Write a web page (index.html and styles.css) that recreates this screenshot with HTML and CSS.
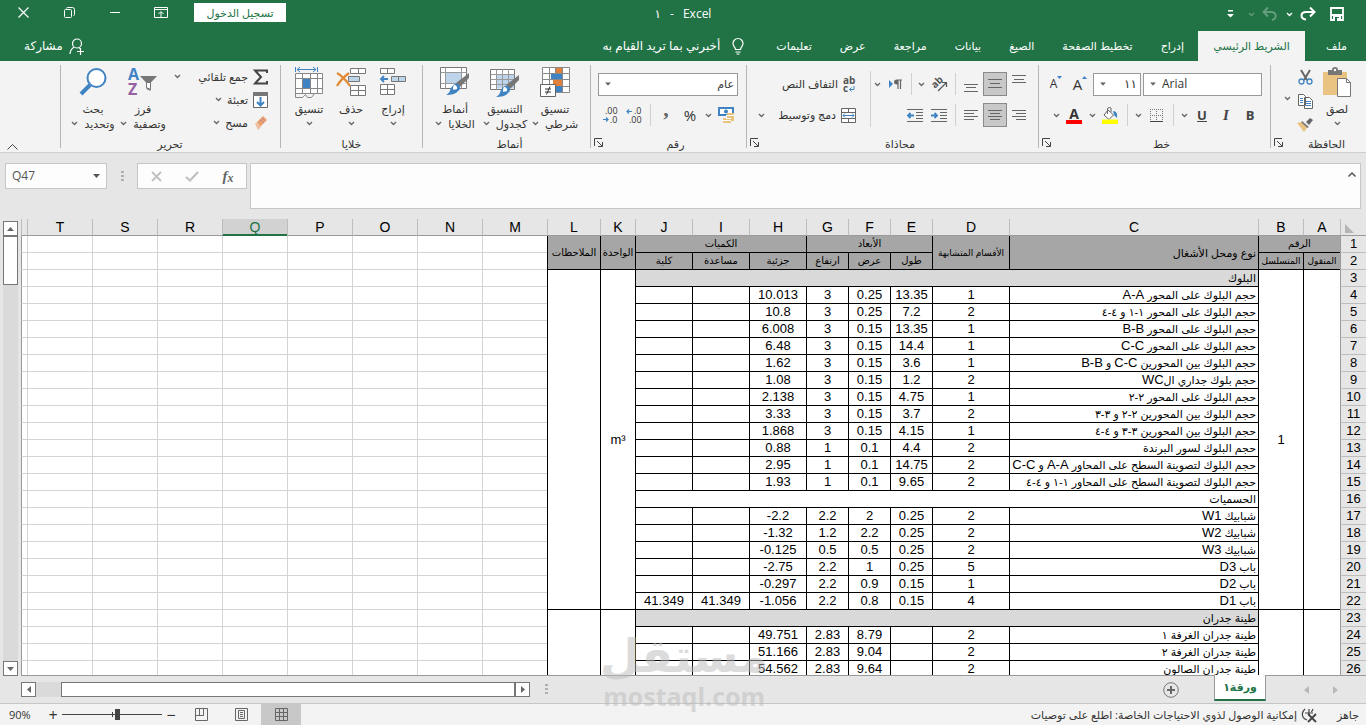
FILE: index.html
```html
<!DOCTYPE html>
<html lang="ar" dir="rtl">
<head>
<meta charset="utf-8">
<title>Excel - ١</title>
<link rel="stylesheet" href="styles.css">
</head>
<body>
<svg class="defs" aria-hidden="true">
  <symbol id="chev" viewBox="0 0 7 5"><path d="M1 1l2.500 2.500L6 1" fill="none" stroke="currentColor" stroke-width="1.300"/></symbol>
  <symbol id="tri" viewBox="0 0 7 4"><path d="M0 0h7L3.500 4z" fill="currentColor"/></symbol>
  <symbol id="launch" viewBox="0 0 9 9"><path d="M.5 8V.5H8M3 3l5 5M8.500 4v4.500H4" fill="none" stroke="#444" stroke-width="1"/></symbol>
  <symbol id="pen" viewBox="0 0 24 24"><path d="M23 1v5L14 15l-4-4z" fill="#777"/><path d="M12 12a4 4 0 0 1 0 7c-2 3-7 4-12 4 4-2 4-5 5-7 2-3 4-5 7-4z" fill="#3f83c3"/><path d="M8 13a3 3 0 0 1 3 4c-2 1-3 0-4 1 0-2 0-4 1-5z" fill="#fff"/></symbol>
</svg>

<header class="titlebar">
  <div class="quick">
    <button class="ic save" aria-label="حفظ"><svg width="14" height="14" viewBox="0 0 14 14"><path d="M1 1h12v12H1z" fill="none" stroke="#fff" stroke-width="1.800"/><path d="M1 7h12v2H1zM3 9h8v4H3z" fill="#fff"/><path d="M5 10h4v4H5z" fill="#217346"/><path d="M7 11h2v3H7z" fill="#fff"/></svg></button>
    <button class="ic" aria-label="إعادة"><svg width="16" height="14" viewBox="0 0 16 14"><path d="M14 5H6C0 5 0 12 6 12.500M10 .5L14.500 5 10 9.500" fill="none" stroke="#fff" stroke-width="2"/></svg></button>
    <button class="ch" aria-label="خيارات الإعادة"><svg width="7" height="5"><use href="#chev"/></svg></button>
    <button class="ic dim" aria-label="تراجع"><svg width="16" height="14" viewBox="0 0 16 14"><path d="M2 5h7c6 0 6 7 1 8M6 .5L1.500 5 6 9.500" fill="none" stroke="#fff" stroke-width="2"/></svg></button>
    <button class="ch dim" aria-label="خيارات التراجع"><svg width="7" height="5"><use href="#chev"/></svg></button>
    <button class="ic" aria-label="تخصيص"><svg width="7" height="8" viewBox="0 0 7 8"><path d="M1 0h5v1.500H1zM0 4h7L3.500 7.500z" fill="#fff"/></svg></button>
  </div>
  <h1 class="doc-title"><span>Excel</span><span>-</span><span>١</span></h1>
  <div class="window-tools">
    <button class="signin">تسجيل الدخول</button>
    <button class="win" aria-label="خيارات الشريط"><svg width="14" height="12" viewBox="0 0 14 12"><path d="M.5.5h13v10H.5zM.5 2.500h13M7 10V5M4.500 7L7 4.500 9.500 7" fill="none" stroke="#fff"/></svg></button>
    <button class="win" aria-label="تصغير"><svg width="10" height="12"><path d="M0 5.500h10" stroke="#fff"/></svg></button>
    <button class="win" aria-label="استعادة"><svg width="11" height="11" viewBox="0 0 11 11"><path d="M.5 3.500q0-1 1-1h5q1 0 1 1v6q0 1-1 1h-5q-1 0-1-1zM2.500 1.500q0-1 1-1h5q2 0 2 2v5q0 1-1 1" fill="none" stroke="#fff"/></svg></button>
    <button class="win" aria-label="إغلاق"><svg width="11" height="11"><path d="M.5.5l10 10M10.500.5l-10 10" stroke="#fff" stroke-width="1.200"/></svg></button>
  </div>
</header>

<nav class="tabs">
  <button class="tab file">ملف</button>
  <button class="tab active">الشريط الرئيسي</button>
  <button class="tab">إدراج</button>
  <button class="tab">تخطيط الصفحة</button>
  <button class="tab">الصيغ</button>
  <button class="tab">بيانات</button>
  <button class="tab">مراجعة</button>
  <button class="tab">عرض</button>
  <button class="tab">تعليمات</button>
  <button class="tell"><svg width="12" height="17" viewBox="0 0 12 17"><path d="M3.500 11.500C3.500 9 1 8.500 1 5.500a5 5 0 0 1 10 0c0 3-2.500 3.500-2.500 6zM3.500 14h5M4.500 16h3" fill="none" stroke="#fff" stroke-width="1.200"/></svg>أخبرني بما تريد القيام به</button>
  <button class="share"><svg width="16" height="17" viewBox="0 0 16 17"><circle cx="8" cy="5.500" r="4.500" fill="none" stroke="#fff" stroke-width="1.200"/><path d="M1 16q0-4 4-7M10 9.500l1 1M8 13.500h7M11.500 10v7" fill="none" stroke="#fff" stroke-width="1.200"/></svg>مشاركة</button>
</nav>

<section class="ribbon">
  <div class="group clipboard">
    <div class="body">
      <button class="big">
        <svg width="28" height="31" viewBox="0 0 28 31"><path d="M0 5h24v23H0z" fill="#eac282"/><path d="M5 3h4a3 3 0 0 1 6 0h4v5H5z" fill="#777"/><circle cx="12" cy="3" r="1.200" fill="#fff"/><path d="M14.500 11.500h9l4 4v14h-13z" fill="#fff" stroke="#777"/><path d="M23.500 11.500v4h4" fill="none" stroke="#777"/></svg>
        <span>لصق</span><svg width="7" height="5"><use href="#chev"/></svg>
      </button>
      <div class="stack">
        <button class="ic" aria-label="قص"><svg width="15" height="15" viewBox="0 0 15 15"><path d="M3 0l6 10M12 0L6 10" stroke="#666" stroke-width="2"/><circle cx="3.500" cy="11.500" r="2.500" fill="none" stroke="#3f83c3" stroke-width="1.300"/><circle cx="11.500" cy="11.500" r="2.500" fill="none" stroke="#3f83c3" stroke-width="1.300"/></svg></button>
        <button class="ic" aria-label="نسخ"><svg width="15" height="15" viewBox="0 0 15 15"><path d="M.5.5h5l2 2v9h-7zM6.500 3.500h5l3 3v8h-8z" fill="#fff" stroke="#666"/><path d="M2 4.500h3M2 6.500h3M2 8.500h3M8 7.500h5M8 9.500h5M8 11.500h5" stroke="#3f83c3"/></svg></button>
        <button class="ic" aria-label="نسخ التنسيق"><svg width="16" height="14" viewBox="0 0 16 14"><path d="M9 4l4-4 3 2-4 5z" fill="#666"/><path d="M5 3l7 6-2 1-6-5z" fill="#777"/><path d="M0 5l4-1 6 6-3 4z" fill="#eac282"/></svg></button>
      </div>
      <button class="ch" aria-label="خيارات النسخ"><svg width="7" height="5"><use href="#chev"/></svg></button>
    </div>
    <footer><h2>الحافظة</h2><button class="launch" aria-label="المزيد"><svg width="9" height="9"><use href="#launch"/></svg></button></footer>
  </div>

  <div class="group font">
    <div class="body rows">
      <div class="row">
        <div class="combo face"><input aria-label="الخط" value="Arial" dir="ltr"><svg width="6" height="4" viewBox="0 0 7 4"><use href="#tri"/></svg></div>
        <div class="combo size"><input aria-label="حجم الخط" value="١١"><svg width="6" height="4" viewBox="0 0 7 4"><use href="#tri"/></svg></div>
        <button class="ic grow" aria-label="تكبير الخط"><span>A</span><svg width="5" height="3" viewBox="0 0 5 3"><path d="M0 3h5L2.500 0z" fill="#3f83c3"/></svg></button>
        <button class="ic grow small" aria-label="تصغير الخط"><span>A</span><svg width="5" height="3" viewBox="0 0 5 3"><path d="M0 0h5L2.500 3z" fill="#3f83c3"/></svg></button>
      </div>
      <div class="row">
        <button class="ic letter">B</button>
        <button class="ic letter it">I</button>
        <button class="ic letter un">U</button>
        <button class="ch" aria-label="تسطير"><svg width="7" height="5"><use href="#chev"/></svg></button>
        <i class="sep"></i>
        <button class="ic" aria-label="حدود"><svg width="13" height="13" viewBox="0 0 13 13"><path d="M0 .5h13M0 6.500h13M.5 0v13M6.500 0v13M12.500 0v13" stroke="#777" stroke-dasharray="1 1"/><path d="M0 12.500h13" stroke="#444"/></svg></button>
        <button class="ch" aria-label="أنواع الحدود"><svg width="7" height="5"><use href="#chev"/></svg></button>
        <i class="sep"></i>
        <button class="ic" aria-label="لون التعبئة"><svg width="16" height="17" viewBox="0 0 16 17"><path d="M6 3l5.500 5L7 12.500 2 8z" fill="#fff" stroke="#666"/><path d="M5.500 7V2q0-1.500 2-1.500T9 2v3" fill="none" stroke="#666"/><path d="M11 4q5 0 4 7l-3-3z" fill="#3f83c3"/><path d="M0 12.500h16V17H0z" fill="#ff0"/></svg></button>
        <button class="ch" aria-label="ألوان التعبئة"><svg width="7" height="5"><use href="#chev"/></svg></button>
        <button class="ic color" aria-label="لون الخط"><span>A</span></button>
        <button class="ch" aria-label="ألوان الخط"><svg width="7" height="5"><use href="#chev"/></svg></button>
      </div>
    </div>
    <footer><h2>خط</h2><button class="launch" aria-label="المزيد"><svg width="9" height="9"><use href="#launch"/></svg></button></footer>
  </div>

  <div class="group align">
    <div class="body">
      <div class="rows">
        <div class="row">
          <button class="ic" aria-label="محاذاة لأعلى"><svg width="14" height="18"><path d="M0 .5h14M2 4.500h10M0 7.500h14" stroke="#666"/></svg></button>
          <button class="ic on" aria-label="محاذاة للوسط"><svg width="14" height="18"><path d="M0 4.500h14M2 8.500h10M0 12.500h14" stroke="#666"/></svg></button>
          <button class="ic" aria-label="محاذاة لأسفل"><svg width="14" height="18"><path d="M0 9.500h14M2 12.500h10M0 16.500h14" stroke="#666"/></svg></button>
          <i class="sep"></i>
          <button class="ic" aria-label="الاتجاه"><svg width="17" height="15" viewBox="0 0 17 15"><text x="0" y="0" class="ab" transform="translate(4 12) rotate(-45)">ab</text><path d="M7 14l8-8M11 5.500h4.500V10" fill="none" stroke="#555" stroke-width="1.200"/></svg></button>
          <button class="ch" aria-label="خيارات الاتجاه"><svg width="7" height="5"><use href="#chev"/></svg></button>
          <i class="sep"></i>
          <button class="ic" aria-label="اتجاه النص"><svg width="13" height="11" viewBox="0 0 13 11"><path d="M0 1l4 4-4 4z" fill="#3f83c3"/><path d="M9 1h4M9 1v9M11.500 1v9" stroke="#666" stroke-width="1.200"/><path d="M9 .5v5H8q-3 0-3-2.500T8 .5z" fill="#666"/></svg></button>
          <button class="ch" aria-label="خيارات اتجاه النص"><svg width="7" height="5"><use href="#chev"/></svg></button>
        </div>
        <div class="row">
          <button class="ic" aria-label="محاذاة لليمين"><svg width="14" height="12"><path d="M0 1.500h14M4 4.500h10M0 7.500h14M4 10.500h10" stroke="#666"/></svg></button>
          <button class="ic on" aria-label="توسيط"><svg width="14" height="12"><path d="M0 1.500h14M2 4.500h10M0 7.500h14M2 10.500h10" stroke="#666"/></svg></button>
          <button class="ic" aria-label="محاذاة لليسار"><svg width="14" height="12"><path d="M0 1.500h14M0 4.500h10M0 7.500h14M0 10.500h10" stroke="#666"/></svg></button>
          <i class="sep"></i>
          <button class="ic" aria-label="إنقاص المسافة البادئة"><svg width="16" height="13" viewBox="0 0 16 13"><path d="M0 .5h16M9 3.500h7M9 6.500h7M9 9.500h7M0 12.500h16" stroke="#666"/><path d="M0 6.500h6M3.500 4L6 6.500 3.500 9" fill="none" stroke="#3f83c3" stroke-width="1.800"/></svg></button>
          <button class="ic" aria-label="زيادة المسافة البادئة"><svg width="16" height="13" viewBox="0 0 16 13"><path d="M0 .5h16M9 3.500h7M9 6.500h7M9 9.500h7M0 12.500h16" stroke="#666"/><path d="M1 6.500h6M3.500 4L1 6.500 3.500 9" fill="none" stroke="#3f83c3" stroke-width="1.800"/></svg></button>
        </div>
      </div>
      <i class="rule"></i>
      <div class="rows wide">
        <button class="row item"><svg width="13" height="17" viewBox="0 0 13 17"><text x="0" y="8" class="ab">ab</text><text x="0" y="16" class="ab">c</text><path d="M11 10v3.500H6.500M8.500 11.500l-2 2 2 2" fill="none" stroke="#3f83c3"/></svg>التفاف النص</button>
        <button class="row item"><svg width="15" height="15" viewBox="0 0 15 15"><path d="M.5.5h14v14H.5zM.5 4.500h14M.5 10.500h14M7.500.5v4M7.500 10.500v4" fill="#fff" stroke="#666"/><path d="M2 7.500h11M4 5.500l-2 2 2 2M11 5.500l2 2-2 2" fill="none" stroke="#3f83c3"/></svg>دمج وتوسيط<svg class="far" width="7" height="5"><use href="#chev"/></svg></button>
      </div>
    </div>
    <footer><h2>محاذاة</h2><button class="launch" aria-label="المزيد"><svg width="9" height="9"><use href="#launch"/></svg></button></footer>
  </div>

  <div class="group number">
    <div class="body rows">
      <div class="row"><div class="combo fmt"><input aria-label="تنسيق الأرقام" value="عام"><svg width="6" height="4" viewBox="0 0 7 4"><use href="#tri"/></svg></div></div>
      <div class="row">
        <button class="ic" aria-label="تنسيق محاسبي"><svg width="16" height="16" viewBox="0 0 16 16"><path d="M0 0h16v9H0z" fill="#3f83c3"/><path d="M2 2h12v5H2z" fill="#fff"/><circle cx="8" cy="4.500" r="2" fill="#3f83c3"/><path d="M9 6h7v8h-3v2H5v-5h4z" fill="#eac282"/><path d="M8 8.500h8M8 11.500h5M5 13.500h8" stroke="#fff"/></svg></button>
        <button class="ch" aria-label="خيارات العملة"><svg width="7" height="5"><use href="#chev"/></svg></button>
        <button class="ic percent">%</button>
        <button class="ic comma">,</button>
        <i class="sep"></i>
        <button class="ic" aria-label="إنقاص المنازل"><svg width="16" height="14" viewBox="0 0 16 14"><text x="8" y="6" class="dec">.0</text><text x="3" y="15" class="dec">.00</text><path d="M1 3.500h5M3 1.500l-2 2 2 2" fill="none" stroke="#3f83c3" stroke-width="1.200"/></svg></button>
        <button class="ic" aria-label="زيادة المنازل"><svg width="16" height="14" viewBox="0 0 16 14"><text x="3" y="6" class="dec">.00</text><text x="8" y="15" class="dec">.0</text><path d="M1 11.500h5M4 9.500l2 2-2 2" fill="none" stroke="#3f83c3" stroke-width="1.200"/></svg></button>
      </div>
    </div>
    <footer><h2>رقم</h2><button class="launch" aria-label="المزيد"><svg width="9" height="9"><use href="#launch"/></svg></button></footer>
  </div>

  <div class="group styles">
    <div class="body">
      <button class="big"><svg width="30" height="31" viewBox="0 0 30 31"><path d="M2.500.5h27v25h-27zM2.500 6.500h27M2.500 12.500h27M2.500 19.500h27M9.500.5v25M15.500.5v25M22.500.5v25" fill="#fff" stroke="#888"/><path d="M16 1h6v5h-6zM13 13h9v6h-9z" fill="#e0803a"/><path d="M11 7h11v5H11zM16 19h6v6h-6z" fill="#3f83c3"/><path d="M.5 17.500h15v12H.5z" fill="#fff" stroke="#666"/><path d="M5 22h6M5 25h6M10 19.500L6.500 27.500" stroke="#333"/></svg><span>تنسيق</span><span class="l2">شرطي<svg width="7" height="5"><use href="#chev"/></svg></span></button>
      <button class="big"><svg width="30" height="31" viewBox="0 0 30 31"><path d="M.5 2.500h24v20H.5z" fill="#fff" stroke="#777"/><path d="M7 7.500h17v14H7z" fill="#bdd4ea"/><path d="M.5 7.500h24M.5 12.500h24M.5 17.500h24M6.500 2.500v20M12.500 2.500v20M18.500 2.500v20" stroke="#999"/><use href="#pen" x="6" y="7" width="24" height="24"/></svg><span>التنسيق</span><span class="l2">كجدول<svg width="7" height="5"><use href="#chev"/></svg></span></button>
      <button class="big"><svg width="30" height="31" viewBox="0 0 30 31"><path d="M.5.5h26v21H.5z" fill="#fff" stroke="#777"/><path d="M5 6h16v10H5z" fill="#bdd4ea"/><path d="M.5 5.500h26M.5 16.500h26M5.500.5v21M21.500.5v21" fill="none" stroke="#999"/><use href="#pen" x="6" y="5" width="24" height="24"/></svg><span>أنماط</span><span class="l2">الخلايا<svg width="7" height="5"><use href="#chev"/></svg></span></button>
    </div>
    <footer><h2>أنماط</h2></footer>
  </div>

  <div class="group cells">
    <div class="body">
      <button class="big"><svg width="26" height="31" viewBox="0 0 26 31"><path d="M.5 1.500h14v5H.5zM7.500 1.500v5M.5 17.500h14v10H.5zM.5 22.500h14M7.500 17.500v10" fill="#fff" stroke="#777"/><path d="M11.500 9.500h14v5h-14zM18.500 9.500v5" fill="#bdd4ea" stroke="#777"/><path d="M1 12h7M4 9l-3 3 3 3" fill="none" stroke="#3f83c3" stroke-width="1.800"/></svg><span>إدراج</span><svg width="7" height="5"><use href="#chev"/></svg></button>
      <button class="big"><svg width="30" height="31" viewBox="0 0 30 31"><path d="M14.500 1.500h15v5h-15zM22.500 1.500v5M14.500 18.500h15v10h-15zM14.500 23.500h15M22.500 18.500v10" fill="#fff" stroke="#777"/><path d="M12.500 9.500h11v5h-11z" fill="#bdd4ea" stroke="#777"/><path d="M1 6q7 4 13 13M13 6Q5 12 1 19" fill="none" stroke="#e08a35" stroke-width="2.200"/></svg><span>حذف</span><svg width="7" height="5"><use href="#chev"/></svg></button>
      <button class="big"><svg width="28" height="31" viewBox="0 0 28 31"><path d="M.5 0v5M22.500 0v5M2 2.500h19M5 0L2 2.500 5 5M18 0l3 2.500L18 5" fill="none" stroke="#3f83c3"/><path d="M.5 6.500h27v20H.5zM.5 11.500h27M.5 21.500h27M7.500 6.500v20M15.500 6.500v20M22.500 6.500v20" fill="#fff" stroke="#888"/><path d="M8 12h7v9H8z" fill="#3f83c3"/><path d="M.5 26v4.500h7l3-3 2 3h4l3-4" fill="none" stroke="#888"/></svg><span>تنسيق</span><svg width="7" height="5"><use href="#chev"/></svg></button>
    </div>
    <footer><h2>خلايا</h2></footer>
  </div>

  <div class="group editing">
    <div class="body">
      <div class="list">
        <button class="item"><svg width="15" height="16" viewBox="0 0 15 16"><path d="M14 4V1.500H2L8 8l-6 6.500h12V12" fill="none" stroke="#444" stroke-width="2"/></svg>جمع تلقائي<svg class="far" width="7" height="5"><use href="#chev"/></svg></button>
        <button class="item"><svg width="15" height="16" viewBox="0 0 15 16"><path d="M.5.5h14v15H.5z" fill="#fff" stroke="#666"/><path d="M0 0h15v4H0z" fill="#777"/><path d="M7.500 5v8M4 10l3.500 3.500L11 10" fill="none" stroke="#3f83c3" stroke-width="2"/></svg>تعبئة<svg width="7" height="5"><use href="#chev"/></svg></button>
        <button class="item"><svg width="15" height="14" viewBox="0 0 15 14"><path d="M4 6l6-6 4 4-7 7z" fill="#eba06b"/><path d="M2 8l2-2 4 5-3 3z" fill="#ecc0a0"/><path d="M7 4l4 3M9 2l3 3" stroke="#a078c8" stroke-dasharray="1 1"/></svg>مسح<svg width="7" height="5"><use href="#chev"/></svg></button>
      </div>
      <button class="big"><svg width="30" height="31" viewBox="0 0 30 31"><text x="0" y="13" class="az a">A</text><text x="0" y="28" class="az z">Z</text><path d="M12 9h17l-6.500 7v8l-4-2v-6z" fill="#777"/><path d="M18.500 15.500h4v7l-4-2z" fill="#fff" stroke="#777"/></svg><span>فرز</span><span class="l2">وتصفية<svg width="7" height="5"><use href="#chev"/></svg></span></button>
      <button class="big"><svg width="28" height="31" viewBox="0 0 28 31"><circle cx="17.500" cy="11" r="9" fill="#fff" stroke="#3f83c3" stroke-width="2"/><path d="M11 18l-9 9" stroke="#3f83c3" stroke-width="4"/></svg><span>بحث</span><span class="l2">وتحديد<svg width="7" height="5"><use href="#chev"/></svg></span></button>
    </div>
    <footer><h2>تحرير</h2></footer>
  </div>
  <button class="collapse" aria-label="طي الشريط"><svg width="11" height="6"><path d="M.5 5.500l5-5 5 5" fill="none" stroke="#444"/></svg></button>
</section>

<section class="formula">
  <div class="fx-field"><textarea aria-label="شريط الصيغة"></textarea><button aria-label="توسيع"><svg width="8" height="5"><path d="M.5 4.500L4 1l3.500 3.500" fill="none" stroke="#555" stroke-width="1.500"/></svg></button></div>
  <div class="fx-tools">
    <button aria-label="إدراج دالة"><em>f</em><em class="sub">x</em></button>
    <button aria-label="إدخال"><svg width="14" height="11"><path d="M1 6l4 3.500L13 1" fill="none" stroke="#c0c0c0" stroke-width="2.200"/></svg></button>
    <button aria-label="إلغاء"><svg width="11" height="11"><path d="M1 1l9 9M10 1l-9 9" stroke="#c0c0c0" stroke-width="1.800"/></svg></button>
  </div>
  <i class="grip"></i>
  <div class="namebox"><input aria-label="مربع الاسم" value="Q47" dir="ltr"><svg width="7" height="4"><use href="#tri"/></svg></div>
</section>

<main class="sheet">
  <div class="grid">
  <table>
    <colgroup><col class="c-row"><col class="c-a"><col class="c-b"><col class="c-c"><col class="c-d"><col class="c-n" span="3"><col class="c-t" span="3"><col class="c-k"><col class="c-l"><col class="c-x" span="8"><col></colgroup>
    <thead><tr><th class="corner"><svg width="9" height="9"><path d="M0 0v9h9z" fill="#b5b5b5"/></svg></th><th>A</th><th>B</th><th>C</th><th>D</th><th>E</th><th>F</th><th>G</th><th>H</th><th>I</th><th>J</th><th>K</th><th>L</th><th>M</th><th>N</th><th>O</th><th>P</th><th class="sel">Q</th><th>R</th><th>S</th><th>T</th><th></th></tr></thead>
    <tbody>
    <tr><th>1</th><td class="h" colspan="2">الرقم</td><td class="h t" rowspan="2">نوع ومحل الأشغال</td><td class="h tight" rowspan="2">الأقسام المتشابهة</td><td class="h" colspan="3">الأبعاد</td><td class="h" colspan="3">الكميات</td><td class="h" rowspan="2">الواحدة</td><td class="h" rowspan="2">الملاحظات</td><td class="e" colspan="9"></td></tr>
    <tr><th>2</th><td class="h tight">المنقول</td><td class="h tight">المتسلسل</td><td class="h">طول</td><td class="h">عرض</td><td class="h">ارتفاع</td><td class="h">جزئية</td><td class="h">مساعدة</td><td class="h">كلية</td><td class="e" colspan="9"></td></tr>
    <tr><th>3</th><td rowspan="20"></td><td rowspan="20">1</td><td class="t g" colspan="8">البلوك</td><td rowspan="20">m³</td><td rowspan="20"></td><td class="e" colspan="9"></td></tr>
    <tr><th>4</th><td class="t">حجم البلوك على المحور <span>A-A</span></td><td>1</td><td>13.35</td><td>0.25</td><td>3</td><td>10.013</td><td></td><td></td><td class="e" colspan="9"></td></tr>
    <tr><th>5</th><td class="t">حجم البلوك على المحور ١-١ و ٤-٤</td><td>2</td><td>7.2</td><td>0.25</td><td>3</td><td>10.8</td><td></td><td></td><td class="e" colspan="9"></td></tr>
    <tr><th>6</th><td class="t">حجم البلوك على المحور <span>B-B</span></td><td>1</td><td>13.35</td><td>0.15</td><td>3</td><td>6.008</td><td></td><td></td><td class="e" colspan="9"></td></tr>
    <tr><th>7</th><td class="t">حجم البلوك على المحور <span>C-C</span></td><td>1</td><td>14.4</td><td>0.15</td><td>3</td><td>6.48</td><td></td><td></td><td class="e" colspan="9"></td></tr>
    <tr><th>8</th><td class="t">حجم البلوك بين المحورين <span>C-C</span> و <span>B-B</span></td><td>1</td><td>3.6</td><td>0.15</td><td>3</td><td>1.62</td><td></td><td></td><td class="e" colspan="9"></td></tr>
    <tr><th>9</th><td class="t">حجم بلوك جداري ال<span>WC</span></td><td>2</td><td>1.2</td><td>0.15</td><td>3</td><td>1.08</td><td></td><td></td><td class="e" colspan="9"></td></tr>
    <tr><th>10</th><td class="t">حجم البلوك على المحور ٢-٢</td><td>1</td><td>4.75</td><td>0.15</td><td>3</td><td>2.138</td><td></td><td></td><td class="e" colspan="9"></td></tr>
    <tr><th>11</th><td class="t">حجم البلوك بين المحورين ٢-٢ و ٣-٣</td><td>2</td><td>3.7</td><td>0.15</td><td>3</td><td>3.33</td><td></td><td></td><td class="e" colspan="9"></td></tr>
    <tr><th>12</th><td class="t">حجم البلوك بين المحورين ٣-٣ و ٤-٤</td><td>1</td><td>4.15</td><td>0.15</td><td>3</td><td>1.868</td><td></td><td></td><td class="e" colspan="9"></td></tr>
    <tr><th>13</th><td class="t">حجم البلوك لسور البرندة</td><td>2</td><td>4.4</td><td>0.1</td><td>1</td><td>0.88</td><td></td><td></td><td class="e" colspan="9"></td></tr>
    <tr><th>14</th><td class="t">حجم البلوك لتصوينة السطح على المحاور <span>A-A</span> و <span>C-C</span></td><td>2</td><td>14.75</td><td>0.1</td><td>1</td><td>2.95</td><td></td><td></td><td class="e" colspan="9"></td></tr>
    <tr><th>15</th><td class="t">حجم البلوك لتصوينة السطح على المحاور ١-١ و ٤-٤</td><td>2</td><td>9.65</td><td>0.1</td><td>1</td><td>1.93</td><td></td><td></td><td class="e" colspan="9"></td></tr>
    <tr><th>16</th><td class="t" colspan="8">الحسميات</td><td class="e" colspan="9"></td></tr>
    <tr><th>17</th><td class="t">شبابيك <span>W1</span></td><td>2</td><td>0.25</td><td>2</td><td>2.2</td><td>-2.2</td><td></td><td></td><td class="e" colspan="9"></td></tr>
    <tr><th>18</th><td class="t">شبابيك <span>W2</span></td><td>2</td><td>0.25</td><td>2.2</td><td>1.2</td><td>-1.32</td><td></td><td></td><td class="e" colspan="9"></td></tr>
    <tr><th>19</th><td class="t">شبابيك <span>W3</span></td><td>2</td><td>0.25</td><td>0.5</td><td>0.5</td><td>-0.125</td><td></td><td></td><td class="e" colspan="9"></td></tr>
    <tr><th>20</th><td class="t">باب <span>D3</span></td><td>5</td><td>0.25</td><td>1</td><td>2.2</td><td>-2.75</td><td></td><td></td><td class="e" colspan="9"></td></tr>
    <tr><th>21</th><td class="t">باب <span>D2</span></td><td>1</td><td>0.15</td><td>0.9</td><td>2.2</td><td>-0.297</td><td></td><td></td><td class="e" colspan="9"></td></tr>
    <tr><th>22</th><td class="t">باب <span>D1</span></td><td>4</td><td>0.15</td><td>0.8</td><td>2.2</td><td>-1.056</td><td>41.349</td><td>41.349</td><td class="e" colspan="9"></td></tr>
    <tr><th>23</th><td rowspan="4"></td><td rowspan="4"></td><td class="t g" colspan="8">طينة جدران</td><td rowspan="4"></td><td rowspan="4"></td><td class="e" colspan="9"></td></tr>
    <tr><th>24</th><td class="t">طينة جدران الغرفة ١</td><td>2</td><td></td><td>8.79</td><td>2.83</td><td>49.751</td><td></td><td></td><td class="e" colspan="9"></td></tr>
    <tr><th>25</th><td class="t">طينة جدران الغرفة ٢</td><td>2</td><td></td><td>9.04</td><td>2.83</td><td>51.166</td><td></td><td></td><td class="e" colspan="9"></td></tr>
    <tr><th>26</th><td class="t">طينة جدران الصالون</td><td>2</td><td></td><td>9.64</td><td>2.83</td><td>54.562</td><td></td><td></td><td class="e" colspan="9"></td></tr>
    </tbody>
  </table>
  </div>
  <div class="vscroll">
    <button aria-label="لأعلى"><svg width="7" height="4" viewBox="0 0 7 4"><path d="M0 4h7L3.500 0z" fill="#666"/></svg></button>
    <div class="vtrack"><div class="vthumb"></div></div>
    <button aria-label="لأسفل"><svg width="7" height="4" color="#666"><use href="#tri"/></svg></button>
  </div>
</main>

<div class="sheetbar">
  <button class="nav" aria-label="السابق"><svg width="5" height="8"><path d="M0 0v8l5-4z" fill="#b8b8b8"/></svg></button>
  <button class="nav" aria-label="التالي"><svg width="5" height="8"><path d="M5 0v8L0 4z" fill="#b8b8b8"/></svg></button>
  <button class="sheet-tab">ورقة١</button>
  <button class="add" aria-label="ورقة جديدة"><svg width="16" height="16"><circle cx="8" cy="8" r="7.300" fill="none" stroke="#777"/><path d="M4 8h8M8 4v8" stroke="#666" stroke-width="2"/></svg></button>
  <i class="grip"></i>
  <div class="hscroll">
    <button aria-label="لليمين"><svg width="4" height="7"><path d="M0 0v7l4-3.500z" fill="#666"/></svg></button>
    <div class="htrack"><div class="hthumb"></div></div>
    <button aria-label="لليسار"><svg width="4" height="7"><path d="M4 0v7L0 3.500z" fill="#666"/></svg></button>
  </div>
</div>

<footer class="status">
  <span class="ready">جاهز</span>
  <button class="access"><svg width="16" height="14" viewBox="0 0 16 14"><path d="M4 1Q0 5 2 9q1 2 4 3M4 5h8M8 1v6M12 1l-1.500 3" fill="none" stroke="#444" stroke-width="1.200"/><path d="M7 6l8 8M15 6l-8 8" stroke="#444" stroke-width="1.800"/></svg>إمكانية الوصول لذوي الاحتياجات الخاصة: اطلع على توصيات</button>
  <div class="views">
    <button class="on" aria-label="عادي"><svg width="13" height="13"><path d="M.5.5h12v12H.5zM.5 4.500h12M.5 8.500h12M4.500.5v12M8.500.5v12" fill="none" stroke="#666"/></svg></button>
    <button aria-label="تخطيط الصفحة"><svg width="13" height="13"><path d="M.5.5h12v12H.5zM3.500 2.500h6v8h-6zM5 4.500h3M5 6.500h3M5 8.500h3" fill="none" stroke="#666"/></svg></button>
    <button aria-label="فواصل الصفحات"><svg width="13" height="13"><path d="M.5.5h12v12H.5zM.5 7.500h8v-7M4.500.5v7" fill="none" stroke="#666"/></svg></button>
  </div>
  <button class="zoom-btn" aria-label="تصغير">−</button>
  <input class="zoom" type="range" min="0" max="100" value="44" aria-label="تكبير">
  <button class="zoom-btn" aria-label="تكبير">+</button>
  <span class="pct" dir="ltr">90%</span>
</footer>

<div class="watermark" dir="ltr"><b>مستقل</b><span>mostaql.com</span></div>
</body>
</html>
```
FILE: styles.css
```css
* { box-sizing: border-box; }

body {
  margin: 0;
  height: 100vh;
  display: flex;
  flex-direction: column;
  overflow: hidden;
  position: relative;
  background: #e6e6e6;
  color: #333;
  font: 11px/16px "Open Sans", "DejaVu Sans", sans-serif;
}

button, input, textarea {
  font: inherit;
  color: inherit;
  border: 0;
  padding: 0;
  margin: 0;
  background: none;
}
button {
  display: flex;
  align-items: center;
  justify-content: center;
  white-space: nowrap;
}
h1, h2 { margin: 0; font: inherit; }
svg { display: block; flex: none; overflow: visible; }
.defs { position: absolute; width: 0; height: 0; }

.ic { width: 24px; height: 24px; flex: none; }
.ch { width: 12px; height: 24px; flex: none; }
.dim { opacity: 0.3; }

/* Title bar */
.titlebar {
  display: grid;
  grid-template-columns: 1fr auto 1fr;
  align-items: center;
  height: 31px;
  flex: none;
  background: #217346;
  color: #fff;
}
.quick { display: flex; height: 28px; align-self: start; align-items: center; padding-right: 17px; }
.quick .save { margin-left: 5px; }
.quick .dim + .ic { margin-right: 2px; }
.quick .ch { width: 14px; }
.doc-title { display: flex; gap: 9px; font-size: 12px; padding-bottom: 4px; }
.window-tools {
  display: flex;
  justify-content: flex-end;
  align-items: center;
  height: 25px;
  align-self: start;
}
.signin {
  width: 92px;
  height: 19px;
  margin-left: 10px;
  background: #fff;
  color: #217346;
}
.win { width: 46px; height: 24px; }

/* Ribbon tabs */
.tabs {
  display: flex;
  height: 30px;
  flex: none;
  background: #217346;
  color: #fff;
}
.tab { padding: 0 14px; }
.tab.file { padding-right: 19px; padding-left: 21px; }
.tab.active { width: 107px; background: #f3f3f3; color: #217346; }
.tell { gap: 12px; margin-right: 18px; font-size: 12px; }
.share { gap: 6px; margin-right: auto; margin-left: 24px; font-size: 12px; }

/* Ribbon */
.ribbon {
  display: flex;
  height: 92px;
  flex: none;
  padding-top: 4px;
  background: #f3f3f3;
  border-bottom: 1px solid #cfcfcf;
}
.group {
  display: flex;
  flex-direction: column;
  height: 83px;
  border-left: 1px solid #b3b8b6;
}
.group svg { color: #666; }
.body { display: flex; flex: 1; min-height: 0; }
.group footer { position: relative; height: 13px; flex: none; line-height: 13px; text-align: center; padding-left: 8px; margin-bottom: -2px; }
.launch { position: absolute; left: 3px; top: 1px; }
.rows { display: flex; flex-direction: column; gap: 7px; padding-top: 7px; }
.row { display: flex; align-items: center; height: 24px; }
.sep { width: 8px; height: 22px; flex: none; background: linear-gradient(#d0d0d0, #d0d0d0) center / 1px 100% no-repeat; }
.rule { width: 1px; height: 56px; margin-top: 6px; background: #d0d0d0; }
.big { flex-direction: column; justify-content: flex-start; width: 50px; line-height: 15px; padding-top: 2px; }
.big > svg:first-child { margin-bottom: 3px; }
.big > svg:last-child { margin-top: 5px; }
.l2 { display: flex; align-items: center; gap: 6px; }
.on { background: #c8c8c8; border: 1px solid #8a8a8a; }

.clipboard { width: 96px; padding-right: 12px; }
.clipboard .big { width: 34px; }
.clipboard .stack { display: flex; flex-direction: column; padding-right: 3px; }
.clipboard .ch { margin-top: 21px; }
.group.clipboard footer { margin-right: -12px; padding-left: 16px; }
.font { width: 232px; padding-right: 8px; }
.font .sep { width: 10px; }
.align { width: 292px; padding-right: 7px; }
.number { width: 156px; padding-right: 8px; }
.font footer, .align footer, .number footer { margin-right: -8px; padding-left: 14px; }
.styles { width: 168px; padding-right: 10px; }
.cells { width: 142px; padding-right: 8px; }
.cells .big { width: 42px; }
.editing { width: 220px; padding-right: 9px; }
.styles footer { margin-right: -8px; }

.combo {
  display: flex;
  align-items: center;
  height: 23px;
  border: 1px solid #999;
  background: #fff;
  padding: 0 3px 0 6px;
}
.combo input { flex: 1; min-width: 0; width: 0; }
.face { width: 119px; font-size: 12px; }
.face input { text-align: left; padding-left: 6px; }
.size { width: 48px; margin: 0 2px 0 1px; font-size: 12px; }
.fmt { width: 140px; }
.grow { font: 15px/20px "Open Sans", sans-serif; align-items: center; flex-direction: row-reverse; }
.grow svg { align-self: flex-start; margin-top: 4px; }
.grow.small { font-size: 12px; }
.letter { font-weight: 700; font-size: 13px; color: #444; }
.it { font-style: italic; font-family: "Liberation Serif", serif; font-size: 15px; }
.un { text-decoration: underline; }
.color span { width: 16px; height: 17px; border-bottom: 4px solid #f00; font: 700 14px/13px "Open Sans", sans-serif; text-align: center; }
.percent { font-size: 15px; }
.comma { font: 700 22px/8px "Liberation Serif", serif; padding-bottom: 12px; color: #666; }
.ab { font: 700 10px "Open Sans", sans-serif; fill: #555; direction: ltr; }
.dec { font: 9px "Open Sans", sans-serif; fill: #333; direction: ltr; }
.az { font: 700 16px "Open Sans", sans-serif; direction: ltr; }
.a { fill: #3f83c3; }
.z { fill: #9561a3; }
.wide { padding-right: 14px; width: 118px; }
.item { display: flex; justify-content: flex-start; gap: 5px; }
.far { margin-right: auto; }
.wide .far { margin-left: 6px; }
.list { width: 103px; display: flex; flex-direction: column; }
.list .item { height: 23px; padding-right: 3px; }
.list .far { margin-left: 6px; }
.collapse { margin: auto auto 2px 7px; }

/* Formula bar */
.formula {
  display: flex;
  align-items: flex-start;
  height: 66px;
  flex: none;
  padding: 10px 5px 0;
}
.fx-field { flex: 1; display: flex; height: 46px; background: #fdfdfd; border: 1px solid #c6c6c6; align-items: flex-start; }
.fx-field button { padding: 8px 4px; order: -1; }
.fx-field textarea { flex: 1; height: 44px; resize: none; }
.fx-tools { display: flex; width: 110px; height: 26px; margin-right: 3px; background: #fdfdfd; border: 1px solid #c6c6c6; }
.fx-tools button { flex: 1; direction: ltr; }
.fx-tools em { font: italic 700 15px/20px "Liberation Serif", serif; color: #666; }
.fx-tools .sub { font-size: 12px; padding-top: 3px; }
.grip { width: 3px; height: 11px; flex: none; background: repeating-linear-gradient(#b0b0b0 0 2px, transparent 2px 4px); }
.formula .grip { margin: 8px 13px 0 14px; }
.namebox { display: flex; flex-direction: row-reverse; align-items: center; width: 102px; height: 26px; padding: 0 6px; background: #fdfdfd; border: 1px solid #c6c6c6; font-size: 12px; color: #555; }
.namebox input { flex: 1; min-width: 0; width: 0; text-align: left; }

/* Worksheet */
.sheet { display: flex; flex: 1; min-height: 0; }
.grid { flex: 1; min-width: 0; overflow: hidden; border-bottom: 1px solid #9a9a9a; }
table { width: 100%; table-layout: fixed; border-collapse: separate; border-spacing: 0; background: #fff; color: #000; font: 13px/16px "Liberation Sans", "DejaVu Sans", sans-serif; }
.c-row { width: 26px; }
.c-a { width: 37px; }
.c-b { width: 45px; }
.c-c { width: 249px; }
.c-d { width: 77px; }
.c-n { width: 42px; }
.c-t { width: 57px; }
.c-k { width: 35px; }
.c-l { width: 53px; }
.c-x { width: 65px; }
td, th {
  height: 17px;
  padding: 0;
  overflow: hidden;
  white-space: nowrap;
  font-weight: 400;
  text-align: center;
  vertical-align: middle;
  border: 0 solid #000;
  border-width: 0 0 1px 1px;
}
th { background: #e6e6e6; }
td { direction: ltr; }
thead th { font-size: 14px; border-color: #9a9a9a #9a9a9a #9a9a9a #bdbdbd; }
tbody th { border-color: #bdbdbd #9a9a9a; }
thead .sel { background: #d2d2d2; color: #217346; box-shadow: inset 0 -1px #217346; border-bottom-color: #217346; }
.corner { padding: 3px 12px 0 0; }
.h { direction: rtl; background: #a6a6a6; font-size: 10px; }
.t { direction: rtl; text-align: right; padding-right: 2px; font-size: 11px; }
.tight { font-size: 9px; }
.t span { font-size: 13px; line-height: 12px; }
.g { background: #d9d9d9; }
.e { border-color: #d4d4d4; border-left-color: #9a9a9a; background: repeating-linear-gradient(to left, transparent 0 64px, #d4d4d4 64px 65px); }

.vscroll { width: 21px; display: flex; flex-direction: column; padding: 2px 3px 0 3px; }
.vscroll button, .hscroll button { width: 15px; height: 15px; flex: none; background: #fff; border: 1px solid #777; }
.vtrack { flex: 1; background: #dadada; }
.vthumb { height: 49px; background: #fff; border: 1px solid #777; }

/* Sheet tabs and horizontal scroll */
.sheetbar { display: flex; align-items: center; height: 28px; flex: none; padding: 0 16px 0 21px; border-bottom: 1px solid #c6c6c6; }
.nav { width: 29px; }
.sheet-tab { width: 52px; height: 26px; margin: -1px 26px 3px 0; background: #fff; border: 1px solid #9a9a9a; border-top: 0; border-bottom: 2px solid #217346; color: #217346; font-weight: 700; }
.add { margin-right: 35px; }
.sheetbar .grip { margin-right: auto; margin-left: 15px; }
.hscroll { display: flex; width: 509px; }
.htrack { flex: 1; background: #dadada; }
.hthumb { height: 15px; margin-left: 25px; background: #fff; border: 1px solid #777; }

/* Status bar */
.status { display: flex; align-items: center; height: 21px; flex: none; padding-right: 7px; padding-left: 9px; background: #f3f3f3; }
.access { gap: 4px; margin-right: 20px; }
.views { display: flex; margin-right: auto; margin-left: 2px; align-self: stretch; }
.views button { width: 40px; border: 0; }
.zoom-btn { width: 16px; font-size: 16px; }
.zoom { appearance: none; width: 100px; height: 12px; margin: 0 1px; background: linear-gradient(#444, #444) center / 100% 1px no-repeat, linear-gradient(#444, #444) center / 1px 5px no-repeat; }
.zoom::-webkit-slider-thumb { appearance: none; width: 5px; height: 11px; background: #444; }
.pct { width: 30px; margin-right: 6px; }

/* Overlay mark */
.watermark {
  position: absolute;
  left: 600px;
  bottom: 15px;
  display: flex;
  flex-direction: column;
  align-items: center;
  color: #bbb;
  opacity: 0.5;
  pointer-events: none;
}
.watermark b { font: 700 46px/52px "DejaVu Sans", sans-serif; }
.watermark span { font: 700 25px/28px "Open Sans", sans-serif; }
```
